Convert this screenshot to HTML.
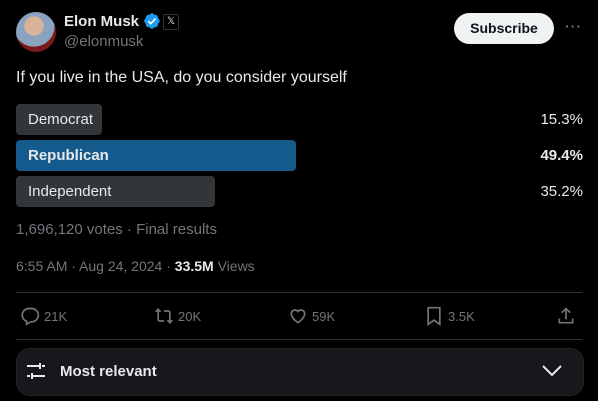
<!DOCTYPE html><html><head><style>
body{margin:0;width:598px;height:401px;background:#000;font-family:"Liberation Sans",sans-serif;color:#e7e9ea;position:relative;overflow:hidden}
.a{position:absolute}
.bar{position:absolute;left:16px;height:31px;border-radius:4px;background:#333639;font-size:15px;line-height:31px;padding-left:12px;box-sizing:border-box}
.pct{position:absolute;right:15px;font-size:15px;line-height:31px}
.g{color:#71767b}
.act{position:absolute;top:306px;font-size:13px;color:#71767b;display:flex;align-items:center;gap:4px}
</style></head><body>
<div class="a" style="left:16px;top:12px;width:40px;height:40px;border-radius:50%;background:radial-gradient(circle at 45% 35%,#d8b39a 0 28%,#8aa3c0 29% 60%,#7a1a1a 61%)"></div>
<div class="a" style="left:64px;top:13px;font-size:15px;font-weight:bold">Elon Musk</div>
<svg class="a" style="left:143px;top:12px" width="18" height="18" viewBox="0 0 22 22"><path fill="#1d9bf0" d="M20.4 11c0-1.3-.8-2.5-2-3 .3-1.3-.1-2.6-1-3.5s-2.2-1.3-3.5-1c-.6-1.200-1.7-2-3-2s-2.4.8-3 2c-1.3-.3-2.6.1-3.5 1s-1.3 2.2-1 3.5c-1.2.6-2 1.7-2 3s.8 2.4 2 3c-.3 1.3.1 2.6 1 3.5s2.2 1.3 3.5 1c.6 1.2 1.7 2 3 2s2.4-.8 3-2c1.3.3 2.6-.1 3.5-1s1.3-2.2 1-3.5c1.2-.6 2-1.7 2-3z"/><path d="M6.5 11.3l3 3 6-6.3" stroke="#fff" stroke-width="2" fill="none"/></svg>
<div class="a" style="left:163px;top:14px;width:14px;height:14px;border:1px solid #333;border-radius:2px;font-size:10px;line-height:14px;text-align:center">𝕏</div>
<div class="a g" style="left:64px;top:33px;font-size:15px">@elonmusk</div>
<div class="a" style="left:454px;top:13px;width:100px;height:31px;border-radius:16px;background:#eff3f4;color:#0f1419;font-weight:bold;font-size:14px;line-height:31px;text-align:center">Subscribe</div>
<div class="a g" style="left:565px;top:18px;font-size:14px;letter-spacing:1px;font-weight:bold">···</div>
<div class="a" style="left:16px;top:69px;font-size:16px">If you live in the USA, do you consider yourself</div>
<div class="bar" style="top:104px;width:86px">Democrat</div><div class="pct" style="top:104px">15.3%</div>
<div class="bar" style="top:140px;width:280px;background:#155a8c;font-weight:bold">Republican</div><div class="pct" style="top:140px;font-weight:bold">49.4%</div>
<div class="bar" style="top:176px;width:199px">Independent</div><div class="pct" style="top:176px">35.2%</div>
<div class="a g" style="left:16px;top:221px;font-size:15px">1,696,120 votes · Final results</div>
<div class="a g" style="left:16px;top:258px;font-size:14px">6:55 AM · Aug 24, 2024 · <b style="color:#e7e9ea">33.5M</b> Views</div>
<div class="a" style="left:16px;top:292px;width:566px;height:1px;background:#2f3336"></div>
<div class="act" style="left:20px"><svg width="20" height="20" viewBox="0 0 24 24" fill="none" stroke="#71767b" stroke-width="2"><path d="M10 3h4a8 8 0 010 16h-1l-5 3v-3.5A8 8 0 0110 3z"/></svg>21K</div>
<div class="act" style="left:154px"><svg width="20" height="20" viewBox="0 0 24 24" fill="none" stroke="#71767b" stroke-width="2"><path d="M2 7l3-3 3 3M5 4v12a2 2 0 002 2h5M22 17l-3 3-3-3M19 20V8a2 2 0 00-2-2h-5"/></svg>20K</div>
<div class="act" style="left:288px"><svg width="20" height="20" viewBox="0 0 24 24" fill="none" stroke="#71767b" stroke-width="2"><path d="M12 20s-8-5-8-11a4.5 4.5 0 018-2.5A4.5 4.5 0 0120 9c0 6-8 11-8 11z"/></svg>59K</div>
<div class="act" style="left:424px"><svg width="20" height="20" viewBox="0 0 24 24" fill="none" stroke="#71767b" stroke-width="2"><path d="M5 2h14v20l-7-5-7 5z"/></svg>3.5K</div>
<div class="act" style="left:556px"><svg width="20" height="20" viewBox="0 0 24 24" fill="none" stroke="#71767b" stroke-width="2"><path d="M12 3v13M7 8l5-5 5 5M4 15v5h16v-5"/></svg></div>
<div class="a" style="left:16px;top:339px;width:566px;height:1px;background:#2f3336"></div>
<div class="a" style="left:16px;top:348px;width:566px;height:46px;border-radius:14px;background:#16181c;border:1px solid #222"></div>
<svg class="a" style="left:26px;top:361px" width="20" height="20" viewBox="0 0 20 20" stroke="#e7e9ea" stroke-width="2"><path d="M1 5h13M14 2v6M16 5h3M1 15h3M6 12v6M6 15h13"/></svg>
<div class="a" style="left:60px;top:363px;font-size:15px;font-weight:bold">Most relevant</div>
<svg class="a" style="left:540px;top:362px" width="24" height="18" viewBox="0 0 24 18" fill="none" stroke="#e7e9ea" stroke-width="2"><path d="M3 4l9 9 9-9"/></svg>
</body></html>
